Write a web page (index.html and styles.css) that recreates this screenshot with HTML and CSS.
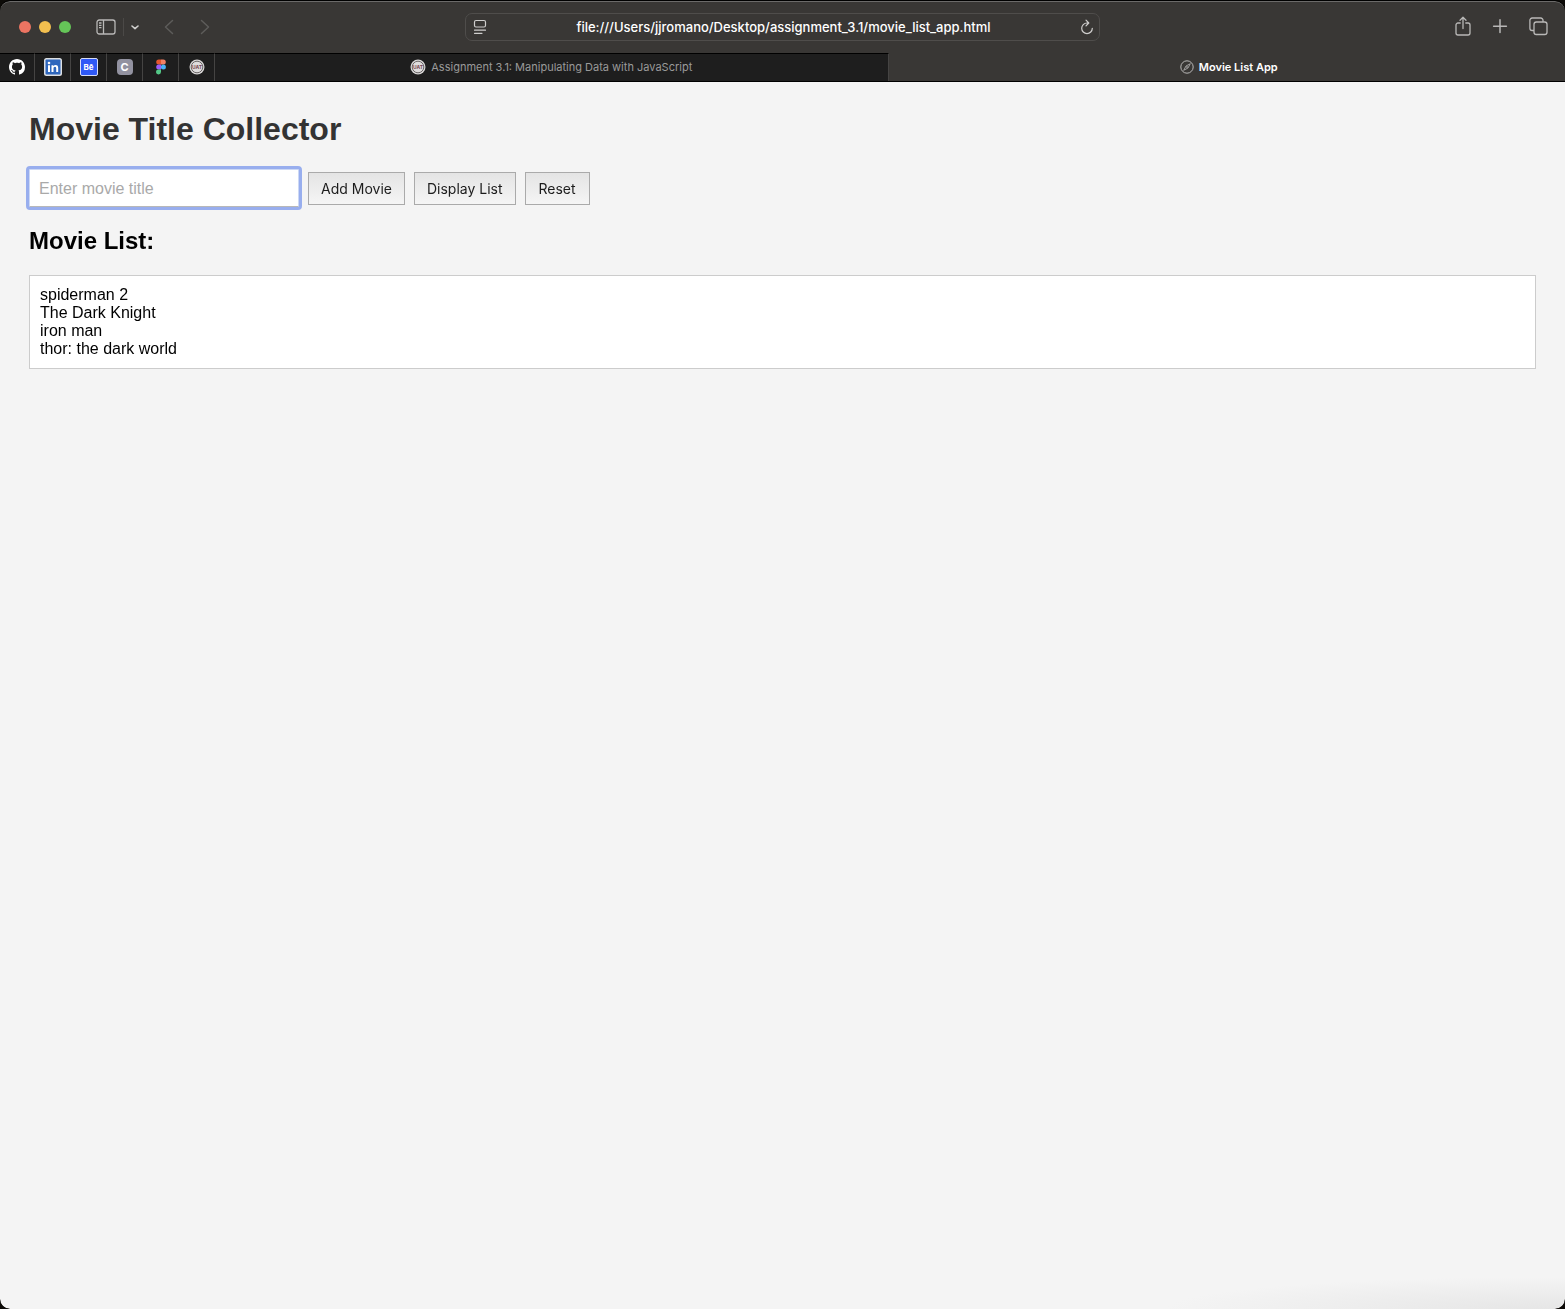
FILE: index.html
```html
<!DOCTYPE html>
<html lang="en">
<head>
<meta charset="utf-8">
<meta name="viewport" content="width=device-width, initial-scale=1">
<title>Movie List App</title>
<link rel="stylesheet" href="styles.css">
</head>
<body>
<div class="window">
  <header class="toolbar">
    <div class="toolbar-start">
      <div class="lights">
        <button class="light light-close" aria-label="Close"></button>
        <button class="light light-minimize" aria-label="Minimize"></button>
        <button class="light light-zoom" aria-label="Zoom"></button>
      </div>
      <div class="sidebar-controls">
        <button class="icon-button" aria-label="Show sidebar">
          <svg width="20" height="16" viewBox="0 0 20 16" fill="none" stroke="#b9b8b7" stroke-width="1.3"><rect x="1" y="1" width="18" height="14" rx="2.2"/><path d="M7.5 1v14M3 4h2.500M3 6.300h2.500M3 8.600h2.500" /></svg>
        </button>
        <span class="divider"></span>
        <button class="icon-button" aria-label="Tab groups">
          <svg width="8" height="16" viewBox="0 0 8 16" fill="none" stroke="#d0cfce" stroke-width="1.6" stroke-linecap="round" stroke-linejoin="round"><path d="M1 7l3 2.600L7 7"/></svg>
        </button>
      </div>
      <div class="history">
        <button class="icon-button" aria-label="Back">
          <svg width="10" height="16" viewBox="0 0 10 16" fill="none" stroke="#5d5c5a" stroke-width="1.5" stroke-linecap="round" stroke-linejoin="round"><path d="M8.500 1.500L1.500 8l7 6.500"/></svg>
        </button>
        <button class="icon-button" aria-label="Forward">
          <svg width="10" height="16" viewBox="0 0 10 16" fill="none" stroke="#5d5c5a" stroke-width="1.5" stroke-linecap="round" stroke-linejoin="round"><path d="M1.500 1.500L8.500 8l-7 6.500"/></svg>
        </button>
      </div>
    </div>
    <div class="address">
      <button class="icon-button" aria-label="Page menu">
        <svg width="14" height="16" viewBox="0 0 14 16" fill="none" stroke="#cfcecd" stroke-width="1.2" stroke-linecap="round"><rect x="1.500" y="1.500" width="11" height="6.500" rx="1.500"/><path d="M1.500 11.200h11M1.500 14.300h7.500"/></svg>
      </button>
      <input class="address-field" type="text" aria-label="Address" value="file:///Users/jjromano/Desktop/assignment_3.1/movie_list_app.html">
      <button class="icon-button" aria-label="Reload">
        <svg width="14" height="16" viewBox="0 0 14 16" fill="none" stroke="#cfcecd" stroke-width="1.200" stroke-linecap="round" stroke-linejoin="round"><path d="M8.500 4H7a5.300 5.300 0 1 0 5.300 5.300M6 1.200L8.800 4 6 6.800"/></svg>
      </button>
    </div>
    <div class="toolbar-end">
      <button class="icon-button" aria-label="Share">
        <svg width="18" height="20" viewBox="0 0 18 20" fill="none" stroke="#b9b8b7" stroke-width="1.300" stroke-linecap="round" stroke-linejoin="round"><path d="M6.200 7H4a2 2 0 0 0-2 2v8a2 2 0 0 0 2 2h10a2 2 0 0 0 2-2V9a2 2 0 0 0-2-2h-2.200M9 12.500V1.500M6 4.300l3-3 3 3"/></svg>
      </button>
      <button class="icon-button" aria-label="New tab">
        <svg width="18" height="20" viewBox="0 0 18 20" fill="none" stroke="#b9b8b7" stroke-width="1.500" stroke-linecap="round"><path d="M9 3.800v12.800M2.600 10.200h12.800"/></svg>
      </button>
      <button class="icon-button" aria-label="Tab overview">
        <svg width="20" height="20" viewBox="0 0 20 20" fill="none" stroke="#b9b8b7" stroke-width="1.300" stroke-linejoin="round"><rect x="6" y="6" width="13" height="12.500" rx="2.300"/><path d="M6 14.500H4.200A2.300 2.300 0 0 1 1.900 12.200V4.300A2.300 2.300 0 0 1 4.200 2h8.500A2.300 2.300 0 0 1 15 4.300V6"/></svg>
      </button>
    </div>
  </header>

  <nav class="tabs" aria-label="Tabs">
    <a class="pin" href="#" aria-label="GitHub">
      <svg width="16" height="16" viewBox="0 0 16 16" fill="#fff"><path d="M8 0C3.580 0 0 3.580 0 8c0 3.540 2.290 6.530 5.470 7.590.4.070.55-.17.55-.38 0-.19-.010-.82-.010-1.490-2.010.37-2.530-.49-2.690-.94-.090-.23-.48-.94-.82-1.130-.28-.15-.68-.52-.010-.53.63-.010 1.080.58 1.230.82.72 1.210 1.870.87 2.330.66.070-.52.28-.87.51-1.070-1.780-.2-3.640-.89-3.640-3.950 0-.87.31-1.590.82-2.150-.080-.2-.36-1.020.080-2.120 0 0 .67-.21 2.200.82.64-.18 1.320-.27 2-.27s1.360.090 2 .27c1.530-1.040 2.200-.82 2.200-.82.44 1.100.16 1.920.080 2.120.51.56.82 1.270.82 2.150 0 3.070-1.870 3.750-3.650 3.950.29.25.54.73.54 1.480 0 1.070-.010 1.930-.010 2.200 0 .21.15.46.55.38A8.010 8.010 0 0 0 16 8c0-4.420-3.580-8-8-8z"/></svg>
    </a>
    <a class="pin" href="#" aria-label="LinkedIn">
      <svg width="18" height="18" viewBox="0 0 18 18"><rect width="18" height="18" rx="2.500" fill="#dcdfe2"/><rect x="1.500" y="1.500" width="15" height="15" rx="1" fill="#2f67bd"/><g fill="#fff"><circle cx="5" cy="5" r="1.300"/><path d="M4 7.200h2V14H4zM7.500 7.200h1.900v1c.5-.8 1.200-1.200 2.200-1.200 1.900 0 2.600 1.200 2.600 3.100V14h-2v-3.500c0-1-.3-1.700-1.200-1.700-1 0-1.500.7-1.500 1.700V14h-2z"/></g></svg>
    </a>
    <a class="pin" href="#" aria-label="Behance"><span class="badge badge-behance">Bē</span></a>
    <a class="pin" href="#" aria-label="Canvas"><span class="badge badge-letter">C</span></a>
    <a class="pin" href="#" aria-label="Figma">
      <svg width="10" height="16" viewBox="0 0 10 16"><path d="M5 .5H2.700a2.500 2.500 0 0 0 0 5H5z" fill="#e4572e"/><path d="M5 .5h2.300a2.500 2.500 0 0 1 0 5H5z" fill="#f28066"/><path d="M5 5.500H2.700a2.500 2.500 0 0 0 0 5H5z" fill="#9b5cf6"/><circle cx="7.400" cy="8" r="2.500" fill="#49b2f8"/><path d="M5 10.500H2.700A2.500 2.500 0 1 0 5 13z" fill="#53c887"/></svg>
    </a>
    <a class="pin" href="#" aria-label="UAT">
      <svg width="16" height="16" viewBox="0 0 16 16"><circle cx="8" cy="8" r="7.500" fill="#d8d6d6"/><circle cx="8" cy="8" r="5.800" fill="#dedcdc" stroke="#6c6868" stroke-width="1"/><text class="seal" x="8" y="10" text-anchor="middle">UAT</text></svg>
    </a>
    <a class="tab" href="#">
      <svg width="16" height="16" viewBox="0 0 16 16"><circle cx="8" cy="8" r="7.500" fill="#d8d6d6"/><circle cx="8" cy="8" r="5.800" fill="#dedcdc" stroke="#6c6868" stroke-width="1"/><text class="seal" x="8" y="10" text-anchor="middle">UAT</text></svg>
      <span>Assignment 3.1: Manipulating Data with JavaScript</span>
    </a>
    <a class="tab tab-active" href="#" aria-current="page">
      <svg width="14" height="14" viewBox="0 0 14 14" fill="none" stroke="#b9b8b7"><circle cx="7" cy="7" r="6.200"/><path d="M10.300 3.700L8 8l-4.300 2.300L6 6z" stroke-width=".8"/><circle cx="7" cy="7" r=".8" fill="#b9b8b7" stroke="none"/></svg>
      <span>Movie List App</span>
    </a>
  </nav>

  <main class="page">
    <h1 class="title">Movie Title Collector</h1>
    <form class="controls" onsubmit="return false">
      <input class="movie-input" type="text" placeholder="Enter movie title" aria-label="Movie title" autofocus>
      <button class="action" type="button">Add Movie</button>
      <button class="action" type="button">Display List</button>
      <button class="action" type="reset">Reset</button>
    </form>
    <h2 class="subtitle">Movie List:</h2>
    <ul class="movies">
      <li>spiderman 2</li>
      <li>The Dark Knight</li>
      <li>iron man</li>
      <li>thor: the dark world</li>
    </ul>
  </main>
</div>
</body>
</html>
```

FILE: styles.css
```css
* {
  box-sizing: border-box;
}

body {
  margin: 0;
  background: #0d0b08;
  font-family: "Liberation Sans", Arial, sans-serif;
}

button {
  margin: 0;
  padding: 0;
  border: 0;
  background: none;
}

svg {
  display: block;
}

.window {
  display: flex;
  flex-direction: column;
  min-height: 100vh;
  border-top: 1px solid #000;
  border-radius: 10px;
  overflow: hidden;
}

/* Browser toolbar */
.toolbar {
  display: grid;
  grid-template-columns: 1fr minmax(0, 635px) 1fr;
  align-items: center;
  height: 52px;
  padding-bottom: 2px;
  border-top: 1px solid #6b6a69;
  border-radius: 10px 10px 0 0;
  background: #393735;
}

.toolbar-start,
.sidebar-controls,
.history,
.toolbar-end,
.lights {
  display: flex;
  align-items: center;
}

.toolbar-start {
  gap: 25px;
  padding-left: 19px;
}

.lights {
  gap: 8px;
}

.light {
  width: 12px;
  height: 12px;
  border-radius: 50%;
}

.light-close {
  background: #ec7462;
}

.light-minimize {
  background: #f3bf4f;
}

.light-zoom {
  background: #65c558;
}

.sidebar-controls {
  gap: 7px;
}

.divider {
  width: 1px;
  height: 18px;
  background: #4b4947;
}

.history {
  gap: 26px;
}

.address {
  display: flex;
  align-items: center;
  height: 28px;
  padding: 0 5px 0 7px;
  border: 1px solid #4f4d4b;
  border-radius: 7px;
}

.address-field {
  flex: 1;
  min-width: 0;
  padding: 0;
  border: 0;
  outline: 0;
  background: none;
  color: #fff;
  font: 500 13px/20px Inter, sans-serif;
  text-align: center;
}

.toolbar-end {
  justify-content: flex-end;
  gap: 19px;
  padding: 0 17px 2px 0;
}

/* Tab strip */
.tabs {
  display: flex;
  height: 29px;
  border-bottom: 1px solid #000;
  background: #1e1e1e;
  font: 400 11px/14px Inter, sans-serif;
}

.pin,
.tab {
  display: flex;
  align-items: center;
  justify-content: center;
  padding-bottom: 2px;
  border-top: 1px solid #000;
  border-right: 1px solid #454443;
  color: #9a9a9a;
  text-decoration: none;
}

.pin {
  flex: none;
  width: 36px;
}

.pin:first-child {
  width: 35px;
}

.tab {
  flex: 1;
  gap: 5px;
  min-width: 0;
  white-space: nowrap;
}

.tab-active {
  padding-left: 4px;
  border-top-color: #393735;
  border-right: 0;
  background: #393735;
  color: #fff;
  font-weight: 600;
}

.badge {
  color: #fff;
  font-weight: 700;
  text-align: center;
}

.badge-behance {
  width: 18px;
  height: 18px;
  border: 1px solid #d7dcf5;
  border-radius: 2px;
  background: #2f59f6;
  font-size: 8px;
  line-height: 16px;
}

.badge-letter {
  width: 16px;
  height: 16px;
  border-radius: 4px;
  background: #9292a0;
  font-size: 11px;
  line-height: 16px;
}

.seal {
  fill: #7a4a54;
  font: 700 5px Inter, sans-serif;
}

/* Page content */
.page {
  flex: 1;
  padding: 28px 29px;
  border-radius: 0 0 10px 10px;
  background:
    radial-gradient(ellipse 380px 32px at calc(100% - 20px) 100%, #e6e6e6, #e6e6e600),
    #f4f4f4;
}

.title {
  margin: 0 0 21px;
  color: #333;
  font-size: 32px;
  line-height: 38px;
}

.controls {
  display: flex;
  align-items: center;
  gap: 9px;
}

.movie-input {
  width: 270px;
  height: 38px;
  padding: 2px 9px 0;
  border: 1px solid #ccd8f5;
  border-bottom-color: #b8b8b8;
  border-radius: 1px;
  outline: 3px solid #98aeee;
  background: #fff;
  font: 16px/18px "Liberation Sans", Arial, sans-serif;
}

.movie-input::placeholder {
  color: #a9a9a9;
}

.action {
  min-width: 65px;
  height: 33px;
  padding: 2px 12px 0;
  border: 1px solid #aaa;
  background: linear-gradient(#e4e4e4, #f5f5f5);
  color: #1c1c1c;
  font: 14px/18px Inter, sans-serif;
}

.subtitle {
  margin: 20px 0;
  color: #000;
  font-size: 24px;
  line-height: 28px;
}

.movies {
  margin: 0;
  padding: 10px;
  border: 1px solid #ccc;
  background: #fff;
  color: #000;
  font-size: 16px;
  line-height: 18px;
  list-style: none;
}
```
